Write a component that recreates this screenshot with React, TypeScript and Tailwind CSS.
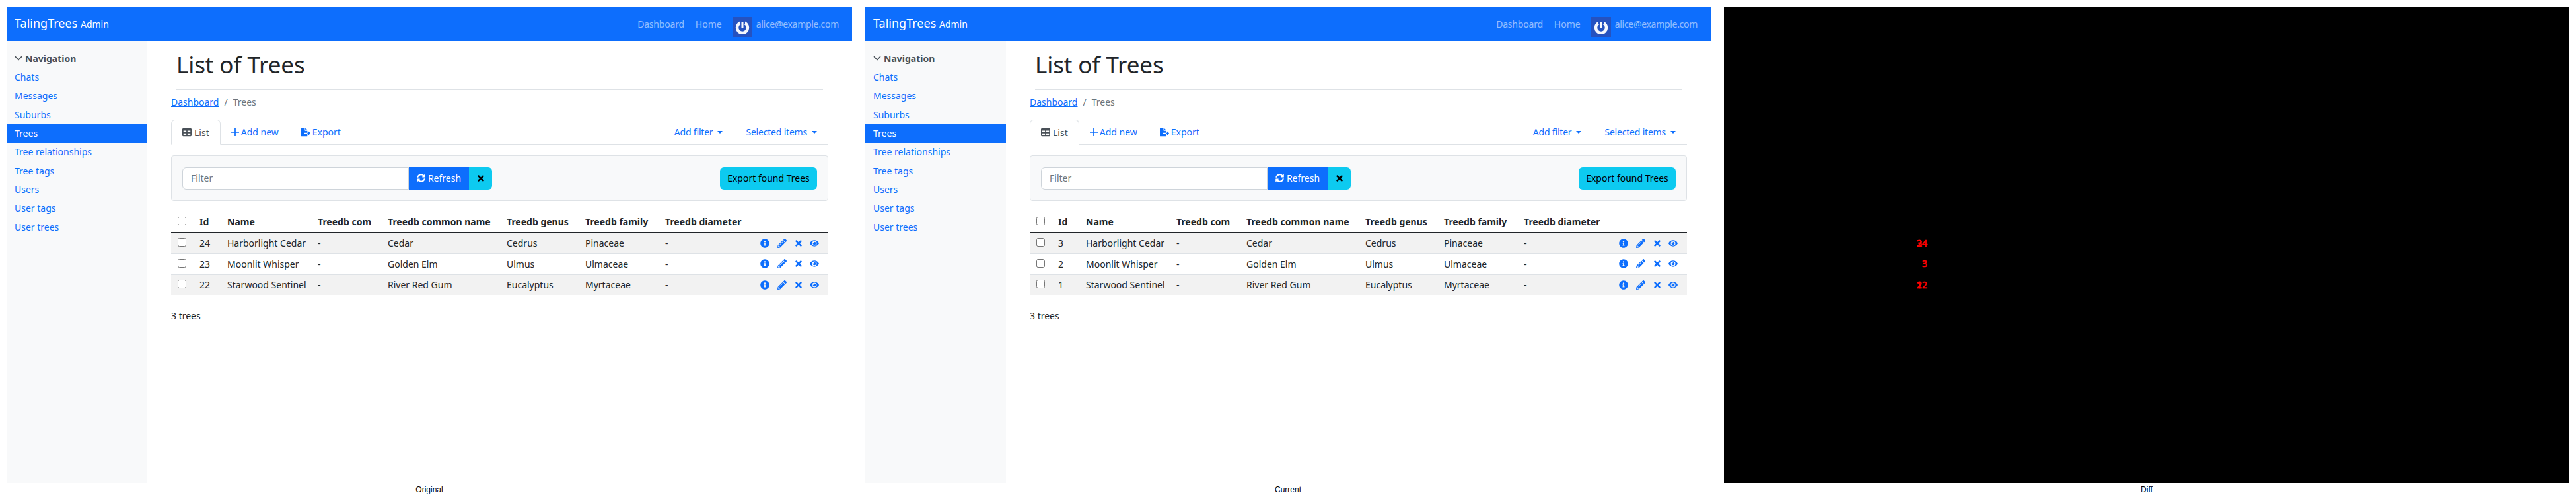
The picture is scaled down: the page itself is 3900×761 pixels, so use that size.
import React from "react";
import { FaSyncAlt, FaTable, FaFileExport, FaTimes, FaInfoCircle, FaPencilAlt, FaEye } from "react-icons/fa";

const nav = ["Chats","Messages","Suburbs","Trees","Tree relationships","Tree tags","Users","User tags","User trees"];
const widths = ["w-[35px]","w-[42px]","w-[137px]","w-[106px]","w-[180px]","w-[119px]","w-[121px]","w-[145px]","w-[110px]"];
const heads = ["Id","Name","Treedb com","Treedb common name","Treedb genus","Treedb family","Treedb diameter"];
const rowHeights = ["h-[31px]", "h-[32px]", "h-[31px]"];

function Caret() {
  return <span className="w-0 h-0 border-x-[4px] border-t-[4px] border-x-transparent border-t-[#0d6efd]" />;
}

function Panel({ ids }: { ids: string[] }) {
  const rows = [
    [ids[0], "Harborlight Cedar", "-", "Cedar", "Cedrus", "Pinaceae", "-"],
    [ids[1], "Moonlit Whisper", "-", "Golden Elm", "Ulmus", "Ulmaceae", "-"],
    [ids[2], "Starwood Sentinel", "-", "River Red Gum", "Eucalyptus", "Myrtaceae", "-"],
  ];
  return (
    <div className="w-[1280px] h-[720px] bg-white flex flex-col text-[14px] leading-[21px] text-[#212529] font-['Noto_Sans',sans-serif] overflow-hidden">
      <header className="h-[52px] shrink-0 bg-[#0d6efd] flex items-center px-3">
        <div className="text-white text-[18px]">TalingTrees <span className="text-[14px]">Admin</span></div>
        <div className="ml-auto flex items-center text-white/55 pr-[8px]">
          <span className="mr-[17px] tracking-[-0.2px]">Dashboard</span>
          <span className="mr-[16px]">Home</span>
          <span className="w-[30px] h-[30px] mt-[10px] mr-[6px] bg-[#2552c0] flex items-center justify-center">
            <svg width="22" height="22" viewBox="0 0 22 22"><circle cx="11" cy="12" r="8" fill="none" stroke="#f4f7fd" strokeWidth="4.5"/><rect x="7" y="0" width="8" height="7" fill="#2552c0"/><rect x="9.5" y="3" width="3" height="9" fill="#f4f7fd"/></svg>
          </span>
          <span className="tracking-[-0.3px]">alice@example.com</span>
        </div>
      </header>
      <div className="flex-1 flex min-h-0">
        <aside className="w-[213px] shrink-0 bg-[#f8f9fa] pt-[11.5px]">
          <div className="flex items-center gap-[4px] pl-3 h-[29px] font-bold text-[#495057]">
            <svg width="12" height="8" viewBox="0 0 12 8" className="shrink-0"><polyline points="1,1.2 6,6.6 11,1.2" fill="none" stroke="#495057" strokeWidth="1.6"/></svg>
            Navigation
          </div>
          <div className="flex flex-col">
            {nav.map((n) => (
              <div key={n} className={"h-[28.33px] flex items-center pl-3 " + (n === "Trees" ? "bg-[#0d6efd] text-white" : "text-[#0d6efd]")}>{n}</div>
            ))}
          </div>
        </aside>
        <main className="flex-1 px-[36px] pt-[15px] min-w-0">
          <div className="mx-[8px] pb-[16px] border-b border-[#dee2e6]">
            <h1 className="text-[35px] leading-[42px] font-normal tracking-[-0.1px]">List of Trees</h1>
          </div>
          <div className="flex items-center mt-[8px] h-[21px] text-[#6c757d]">
            <span className="text-[#0d6efd] underline">Dashboard</span>
            <span className="px-2">/</span><span>Trees</span>
          </div>
          <div className="mt-[16px] h-[38px] flex border-b border-[#dee2e6] text-[#0d6efd]">
            <div className="h-[38px] px-4 flex items-center gap-[4px] bg-white border border-[#dee2e6] border-b-white rounded-t-[6px] text-[#495057]"><FaTable className="text-[14px]" />List</div>
            <div className="h-[37px] px-4 flex items-center gap-[3px]">
              <svg width="12" height="12" viewBox="0 0 12 12" className="shrink-0"><path d="M6 0v12M0 6h12" stroke="#0d6efd" strokeWidth="1.7" fill="none"/></svg>
              Add new
            </div>
            <div className="h-[37px] pl-[18px] pr-4 flex items-center gap-[3px]"><FaFileExport className="text-[14px]" />Export</div>
            <div className="ml-auto mr-[3px] h-[37px] px-4 flex items-center gap-[7px] tracking-[-0.2px]">Add filter<Caret /></div>
            <div className="h-[37px] pl-4 pr-[17px] flex items-center gap-[7px] tracking-[-0.2px]">Selected items<Caret /></div>
          </div>
          <div className="mt-[16px] h-[69px] bg-[#f8f9fa] border border-[#dee2e6] rounded-[4px] flex items-center px-[16px]">
            <div className="flex h-[34px]">
              <div className="w-[343px] bg-white border border-[#ced4da] rounded-l-[6px] flex items-center pl-[12px] text-[#6c757d]">Filter</div>
              <div className="w-[91px] bg-[#0d6efd] text-white flex items-center justify-center gap-[4px]"><FaSyncAlt className="text-[13px]" />Refresh</div>
              <div className="w-[35px] bg-[#0dcaf0] text-black rounded-r-[6px] flex items-center justify-center"><FaTimes className="text-[14px]" /></div>
            </div>
            <div className="ml-auto h-[34px] w-[147px] bg-[#0dcaf0] text-black rounded-[6px] flex items-center justify-center">Export found Trees</div>
          </div>
          <table className="mt-[16px] w-full table-fixed border-collapse">
            <colgroup>{widths.map((w, i) => <col key={i} className={w} />)}</colgroup>
            <thead>
              <tr className="h-[32px] border-b-2 border-[#212529]">
                <th className="pl-[10px] text-left"><input type="checkbox" className="block mb-[2px]" /></th>
                {heads.map((h) => <th key={h} className="px-2 text-left font-bold whitespace-nowrap overflow-hidden">{h}</th>)}
                <th />
              </tr>
            </thead>
            <tbody>
              {rows.map((r, i) => (
                <tr key={i} className={rowHeights[i] + " border-b border-[#dee2e6] " + (i % 2 === 0 ? "bg-[#f2f2f2]" : "bg-white")}>
                  <td className="pl-[10px]"><input type="checkbox" className="block mb-[2px]" /></td>
                  {r.map((c, j) => <td key={j} className="px-2 whitespace-nowrap">{c}</td>)}
                  <td>
                    <div className="flex items-center justify-end pr-[14px] text-[#0d6efd] text-[14px]">
                      <FaInfoCircle />
                      <FaPencilAlt className="ml-[12px]" />
                      <FaTimes className="ml-[11px]" />
                      <FaEye className="ml-[10px]" />
                    </div>
                  </td>
                </tr>
              ))}
            </tbody>
          </table>
          <p className="mt-[20px]">3 trees</p>
        </main>
      </div>
    </div>
  );
}

function Label({ children }: { children: React.ReactNode }) {
  return <div className="w-[1280px] text-center text-[12px] leading-[22px] text-black font-['Liberation_Sans',sans-serif]">{children}</div>;
}

export default function App() {
  const digit = "absolute text-[#ff0000] [-webkit-text-stroke:0.6px_#ff0000]";
  return (
    <div className="w-[3900px] h-[761px] bg-white px-[10px] pt-[10px] overflow-hidden">
      <div className="flex gap-[20px]">
        <Panel ids={["24","23","22"]} />
        <Panel ids={["3","2","1"]} />
        <div className="relative w-[1280px] h-[720px] bg-black text-[14px] leading-[21px] font-['Noto_Sans',sans-serif]">
          <span className={digit + " left-[292px] top-[346.5px]"}>24</span>
          <span className={digit + " left-[292px] top-[346.5px]"}>3</span>
          <span className={digit + " left-[300px] top-[377.5px]"}>3</span>
          <span className={digit + " left-[292px] top-[409.5px]"}>22</span>
          <span className={digit + " left-[292px] top-[409.5px]"}>1</span>
        </div>
      </div>
      <div className="flex gap-[20px]">
        <Label>Original</Label><Label>Current</Label><Label>Diff</Label>
      </div>
    </div>
  );
}
